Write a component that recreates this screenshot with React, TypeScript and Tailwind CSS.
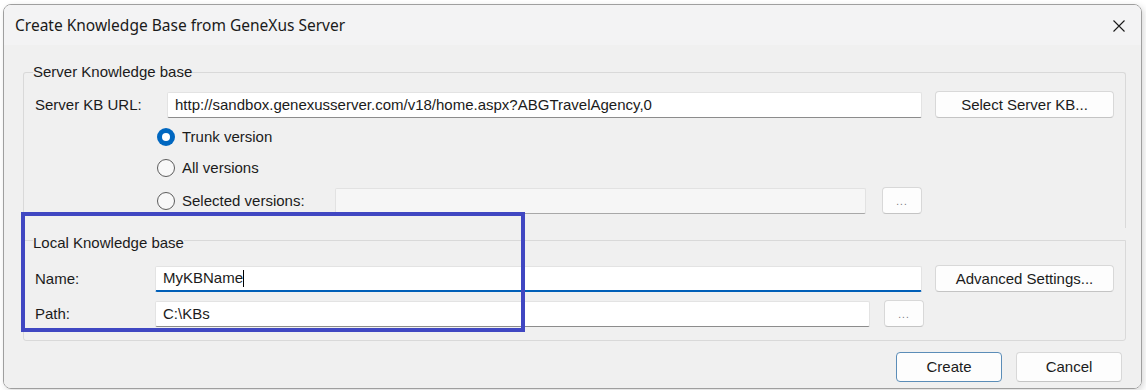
import React from "react";

function TextBox({value, className = "", focused = false, disabled = false}: {value?: string; className?: string; focused?: boolean; disabled?: boolean}) {
    const border = focused
        ? "border-[#e3e3e3] border-b-2 border-b-[#005fb8]"
        : disabled
            ? "border-[#e2e2e2] border-b-[#a8a8a8] bg-[#f6f6f6]"
            : "border-[#e3e3e3] border-b-[#8c8c8c]";
    return (
        <div className={`h-[26px] flex items-center px-[7px] border rounded-[2px] ${disabled ? "" : "bg-white"} ${border} ${className}`}>
            <span className="whitespace-nowrap text-[#1b1b1b]">{value}</span>
            {focused && <span className="w-px h-[17px] bg-black"/>}
        </div>
    );
}

function Button({label, className = "", small = false, primary = false}: {label: string; className?: string; small?: boolean; primary?: boolean}) {
    return (
        <div
            className={`h-[27px] flex items-center justify-center rounded-[4px] border bg-[#fdfdfd] ${primary ? "border-[#5b8db8]" : "border-[#d8d8d8] border-b-[#c4c4c4]"} ${className}`}>
            <span className={small ? "text-[10px] text-[#777] tracking-[1px] mt-[3px]" : "text-[#1b1b1b]"}>{label}</span>
        </div>
    );
}

function Radio({label, checked = false}: {label: string; checked?: boolean}) {
    return (
        <div className="flex items-center">
            {checked ? (
                <span className="w-[18px] h-[18px] rounded-full bg-[#0067c0] flex items-center justify-center">
                    <span className="w-[8px] h-[8px] rounded-full bg-white"/>
                </span>
            ) : (
                <span className="w-[18px] h-[18px] rounded-full border border-[#5c5c5c] bg-[#f8f8f8]"/>
            )}
            <span className="ml-[7px] text-[#1b1b1b]">{label}</span>
        </div>
    );
}

export default function App() {
    return (
        <div className="relative w-[1146px] h-[390px] bg-white overflow-hidden text-[15px] leading-[18px]"
             style={{fontFamily: '"Liberation Sans", Arial, sans-serif'}}>
            <div className="ml-[3px] mt-[4px] w-[1139px] h-[385px] border border-[#9f9f9f] rounded-[8px] overflow-hidden flex flex-col shadow-[2px_2px_6px_rgba(0,0,0,0.15)]">
                {/* title bar */}
                <div className="h-[40px] shrink-0 bg-[#f3f3f4] flex items-center justify-between pl-[11px] pr-[16px]">
                    <span className="text-[15.5px] text-[#1a1a1a]" style={{fontFamily: '"Noto Sans", "Open Sans", sans-serif'}}>
                        Create Knowledge Base from GeneXus Server
                    </span>
                    <svg width="12" height="12" viewBox="0 0 12 12" className="mt-[1px]">
                        <path d="M0.5 0.5L11.5 11.5M11.5 0.5L0.5 11.5" stroke="#1a1a1a" strokeWidth="1.1"/>
                    </svg>
                </div>

                {/* body */}
                <div className="flex-1 bg-[#f0f0f0] pt-[18px] pl-[19px] pr-[15px]">
                    <fieldset className="border border-b-0 border-[#d9d9d9] rounded-t-[3px] px-[11px] pt-[10px] pb-[14px]">
                        <legend className="-ml-[2px] leading-[18px] text-[#1b1b1b]">Server Knowledge base</legend>
                        <div className="flex items-center h-[27px]">
                            <span className="w-[132px] text-[#1b1b1b]">Server KB URL:</span>
                            <TextBox className="flex-1" value="http://sandbox.genexusserver.com/v18/home.aspx?ABGTravelAgency,0"/>
                            <Button label="Select Server KB..." className="ml-[13px] w-[179px]"/>
                        </div>
                        <div className="pl-[122px] mt-[9px] h-[20px] flex items-center">
                            <Radio label="Trunk version" checked/>
                        </div>
                        <div className="pl-[122px] mt-[11px] h-[20px] flex items-center">
                            <Radio label="All versions"/>
                        </div>
                        <div className="pl-[122px] mt-[9px] h-[27px] flex items-center">
                            <div className="w-[178px]">
                                <Radio label="Selected versions:"/>
                            </div>
                            <TextBox className="w-[531px]" disabled/>
                            <Button label="..." small className="ml-[16px] w-[40px]"/>
                        </div>
                    </fieldset>

                    <fieldset className="border border-[#d9d9d9] rounded-b-[3px] px-[11px] pt-[13px] pb-[13px]">
                        <legend className="-ml-[2px] pt-[6px] leading-[18px] text-[#1b1b1b]">Local Knowledge base</legend>
                        <div className="flex items-center h-[27px]">
                            <span className="w-[120px] text-[#1b1b1b]">Name:</span>
                            <TextBox className="flex-1" value="MyKBName" focused/>
                            <Button label="Advanced Settings..." className="ml-[13px] w-[179px]"/>
                        </div>
                        <div className="flex items-center h-[27px] mt-[8px]">
                            <span className="w-[120px] text-[#1b1b1b]">Path:</span>
                            <TextBox className="w-[715px]" value="C:\KBs"/>
                            <Button label="..." small className="ml-[14px] w-[40px]"/>
                        </div>
                    </fieldset>

                    <div className="flex justify-end gap-[14px] mt-[11px] pr-[4px]">
                        <Button label="Create" primary className="w-[106px] h-[30px]"/>
                        <Button label="Cancel" className="w-[106px] h-[30px]"/>
                    </div>
                </div>
            </div>

            {/* highlight annotation */}
            <div className="absolute left-[21px] top-[212px] w-[504px] h-[120px] border-4 border-[#4047c2]"/>
        </div>
    );
}
